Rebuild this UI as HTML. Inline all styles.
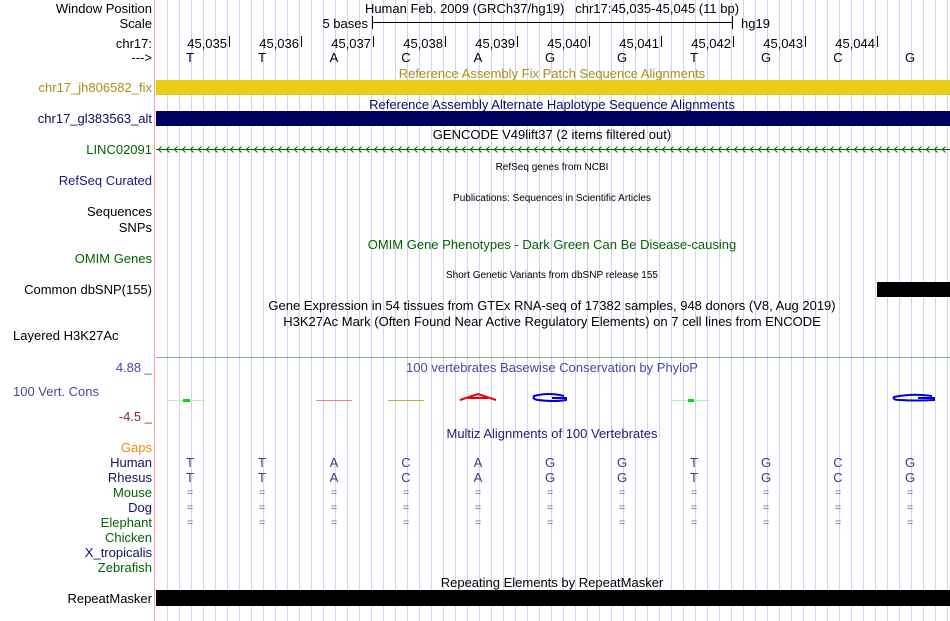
<!DOCTYPE html>
<html><head><meta charset="utf-8"><style>
html,body{margin:0;padding:0;background:#fff;width:950px;height:621px;overflow:hidden}
svg{display:block;font-family:"Liberation Sans",sans-serif}
</style></head><body>
<svg id="s" width="950" height="621" xmlns="http://www.w3.org/2000/svg">
<g id="grid"></g>
<rect x="154" y="0" width="1" height="621" fill="#f4a0a0"/>
<g font-size="13" text-anchor="end">
<text x="152" y="13">Window Position</text>
<text x="152" y="28">Scale</text>
<text x="152" y="48">chr17:</text>
<text x="152" y="62">---&gt;</text>
<text x="152" y="92" fill="#a8901a">chr17_jh806582_fix</text>
<text x="152" y="123" fill="#0c0c6c">chr17_gl383563_alt</text>
<text x="152" y="154" fill="#006400">LINC02091</text>
<text x="152" y="185" fill="#1a1a8a">RefSeq Curated</text>
<text x="152" y="216">Sequences</text>
<text x="152" y="232">SNPs</text>
<text x="152" y="263" fill="#006400">OMIM Genes</text>
<text x="152" y="294">Common dbSNP(155)</text>
<text x="152" y="372" fill="#4848a0">4.88 _</text>
<text x="152" y="421" fill="#902828">-4.5 _</text>
<text x="152" y="452" fill="#f08c00">Gaps</text>
<text x="152" y="467" fill="#10106a">Human</text>
<text x="152" y="482" fill="#10106a">Rhesus</text>
<text x="152" y="497" fill="#006400">Mouse</text>
<text x="152" y="512" fill="#10106a">Dog</text>
<text x="152" y="527" fill="#006400">Elephant</text>
<text x="152" y="542" fill="#006400">Chicken</text>
<text x="152" y="557" fill="#10106a">X_tropicalis</text>
<text x="152" y="572" fill="#006400">Zebrafish</text>
<text x="152" y="603">RepeatMasker</text>
</g>
<text x="13" y="340" font-size="13">Layered H3K27Ac</text>
<text x="13" y="396" font-size="13" fill="#4848a0">100 Vert. Cons</text>
<g font-size="13" text-anchor="middle">
<text x="552" y="13">Human Feb. 2009 (GRCh37/hg19)&#160;&#160; chr17:45,035-45,045 (11 bp)</text>
<text x="552" y="78" fill="#a8901a">Reference Assembly Fix Patch Sequence Alignments</text>
<text x="552" y="109" fill="#0c0c6c">Reference Assembly Alternate Haplotype Sequence Alignments</text>
<text x="552" y="139">GENCODE V49lift37 (2 items filtered out)</text>
<text x="552" y="249" fill="#006400">OMIM Gene Phenotypes - Dark Green Can Be Disease-causing</text>
<text x="552" y="310">Gene Expression in 54 tissues from GTEx RNA-seq of 17382 samples, 948 donors (V8, Aug 2019)</text>
<text x="552" y="326">H3K27Ac Mark (Often Found Near Active Regulatory Elements) on 7 cell lines from ENCODE</text>
<text x="552" y="372" fill="#4848a0">100 vertebrates Basewise Conservation by PhyloP</text>
<text x="552" y="438" fill="#20207a">Multiz Alignments of 100 Vertebrates</text>
<text x="552" y="587">Repeating Elements by RepeatMasker</text>
</g>
<g font-size="10" text-anchor="middle">
<text x="552" y="170">RefSeq genes from NCBI</text>
<text x="552" y="201">Publications: Sequences in Scientific Articles</text>
<text x="552" y="278">Short Genetic Variants from dbSNP release 155</text>
</g>
<text x="368" y="28" font-size="13" text-anchor="end">5 bases</text>
<text x="741" y="28" font-size="13">hg19</text>
<rect x="372" y="22" width="361" height="1" fill="#000"/>
<rect x="372" y="16" width="1" height="13" fill="#000"/>
<rect x="732" y="16" width="1" height="13" fill="#000"/>
<rect x="156" y="80" width="794" height="15" fill="#e8cc16"/>
<rect x="156" y="111" width="794" height="15" fill="#000060"/>
<rect x="156" y="149" width="794" height="1" fill="#006400"/>
<g id="arr" stroke="#006400" fill="none" stroke-width="1"></g>
<rect x="877" y="282" width="73" height="15" fill="#000"/>
<rect x="156" y="357" width="794" height="1" fill="#80b880"/>
<rect x="156" y="590" width="794" height="16" fill="#000"/>
<g id="ticks" font-size="13" text-anchor="end"></g>
<g id="bases" font-size="13" text-anchor="middle"></g>
<g id="cons">
<rect x="167" y="400" width="38" height="1" fill="#b8f0b8"/><rect x="183" y="399" width="7" height="3" fill="#00e000"/>
<rect x="316" y="400" width="36" height="1" fill="#f08080"/>
<rect x="388" y="400" width="36" height="1" fill="#c0b040"/>
<path d="M460 400 L478 394 L496 400 M468 398 L488 398" stroke="#f00000" stroke-width="2" fill="none"/>
<path d="M564 396 Q549 392 534 396 Q532 399 538 400 Q555 402 566 400 L566 398 L552 398" stroke="#0000e0" stroke-width="2" fill="none"/>
<rect x="672" y="400" width="38" height="1" fill="#b8f0b8"/><rect x="688" y="399" width="6" height="3" fill="#00e000"/>
<path d="M932 396 Q913 393 894 397 Q892 400 900 400 Q917 401 934 400 L934 398 L918 398" stroke="#0000e0" stroke-width="2" fill="none"/>
</g>
</svg>
<script>
var NS="http://www.w3.org/2000/svg";
function el(p,t,a,txt){var e=document.createElementNS(NS,t);for(var k in a)e.setAttribute(k,a[k]);if(txt!=null)e.textContent=txt;document.getElementById(p).appendChild(e);return e;}
for(var x=167;x<950;x+=12)el("grid","rect",{x:x,y:0,width:1,height:621,fill:"#d2d2f4"});
for(var x=158;x<948;x+=8)el("arr","path",{d:"M"+(x+3.5)+" 146.5 L"+(x+0.5)+" 149.5 L"+(x+3.5)+" 152.5"});
var seq="TTACAGGTGCG";
for(var i=0;i<11;i++){
 var c=192+72*i;
 if(i<10){var tx=229+72*i;el("ticks","text",{x:tx-2,y:48},"45,0"+(35+i));el("ticks","rect",{x:tx,y:36,width:1,height:11,fill:"#000"});}
 el("bases","text",{x:c-2,y:62},seq[i]);
 el("bases","text",{x:c-2,y:467,fill:"#3a3a8a"},seq[i]);
 el("bases","text",{x:c-2,y:482,fill:"#3a3a8a"},seq[i]);
 for(var r=0;r<3;r++){el("bases","text",{x:c-2,y:496+15*r,fill:"#7070b0","font-size":"11"},"=");}
}
</script>
</body></html>
